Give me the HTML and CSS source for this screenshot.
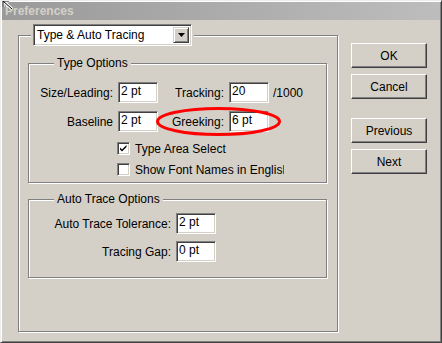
FILE: index.html
```html
<!DOCTYPE html>
<html>
<head lang="en">
    <meta charset="UTF-8">
    <title>Preferences</title>
    <link rel="stylesheet" href="styles.css">
</head>
<body>
<div class="window">
    <div class="titlebar">Preferences</div>
    <div class="client">
        <fieldset class="group outer">
            <legend class="select-legend">
                <div class="select">
                    <span class="select-text">Type &amp; Auto Tracing</span>
                    <span class="select-btn"><svg width="7" height="4" viewBox="0 0 7 4"><path d="M0 0h7L3.5 4z" fill="#000"/></svg></span>
                </div>
            </legend>

            <fieldset class="group inner type-options">
                <legend class="caption">Type Options</legend>
                <div class="form-grid type-grid">
                    <label class="lbl">Size/Leading:</label>
                    <div class="field">2 pt</div>
                    <label class="lbl">Tracking:</label>
                    <div class="field">20</div>
                    <span class="unit">/1000</span>

                    <label class="lbl">Baseline</label>
                    <div class="field">2 pt</div>
                    <label class="lbl">Greeking:</label>
                    <div class="field">6 pt</div>
                    <span></span>

                    <div class="check-row first">
                        <span class="checkbox"><svg width="9" height="9" viewBox="0 0 9 9"><path d="M1 3.5l2 2 4.5-4.5v2L3 7.5 1 5.5z" fill="#000"/></svg></span>
                        <span class="check-text">Type Area Select</span>
                    </div>
                    <div class="check-row">
                        <span class="checkbox"></span>
                        <span class="check-text clip">Show Font Names in English</span>
                    </div>
                </div>
            </fieldset>

            <fieldset class="group inner trace-options">
                <legend class="caption">Auto Trace Options</legend>
                <div class="form-grid trace-grid">
                    <label class="lbl">Auto Trace Tolerance:</label>
                    <div class="field">2 pt</div>
                    <label class="lbl">Tracing Gap:</label>
                    <div class="field">0 pt</div>
                </div>
            </fieldset>
        </fieldset>

        <div class="buttons">
            <button class="btn">OK</button>
            <button class="btn">Cancel</button>
            <button class="btn spaced">Previous</button>
            <button class="btn">Next</button>
        </div>
    </div>

    <!-- annotation drawn over the dialog -->
    <svg class="mark" width="128" height="33" viewBox="0 0 128 33">
        <ellipse cx="63.5" cy="15.5" rx="61" ry="13" fill="none" stroke="#f00" stroke-width="3"/>
    </svg>
    <svg class="cursor" width="13" height="11" viewBox="0 0 13 11">
        <path d="M2 1L11 9M2 1v6M2 1h6" stroke="#fff" stroke-width="3" fill="none"/>
        <path d="M2 1L11 9M2 1v6M2 1h6" stroke="#000" stroke-width="1" fill="none"/>
    </svg>
</div>
</body>
</html>
```

FILE: styles.css
```css
*{
    box-sizing: border-box;
}
body{
    margin: 0;
    background: #d4d0c8;
    font-family: "Liberation Sans", Arial, sans-serif;
    font-size: 12px;
    color: #000;
}
.window{
    position: relative;
    width: 442px;
    height: 343px;
    background: #d4d0c8;
    border: 1px solid;
    border-color: #ececec #404040 #404040 #ececec;
    box-shadow: inset 1px 1px 0 #fff, inset -1px -1px 0 #808080;
    padding: 1px;
    overflow: hidden;
}
.titlebar{
    height: 18px;
    line-height: 18px;
    padding-left: 3px;
    font-weight: bold;
    color: #d4d0c8;
    background: linear-gradient(to right, #9a9a9a, #bdbdbd);
}
.client{
    display: flex;
    align-items: flex-start;
    padding: 4px 0 0 16px;
}

/* group boxes */
.group{
    margin: 0;
    padding: 0;
    min-width: 0;
    border: 1px solid #808080;
    box-shadow: 1px 1px 0 #fff, inset 1px 1px 0 #fff;
}
.outer{
    width: 320px;
    height: 308px;
    padding: 0 0 0 9px;
}
.inner{
    width: 299px;
}
.select-legend{
    padding: 0 2px;
    margin-left: 3px;
    background: #d4d0c8;
}
.caption{
    margin-left: 18px;
    padding: 0 3px;
    line-height: 15px;
    background: #d4d0c8;
}
.type-options{
    margin-top: 10px;
    padding: 11px 0 6px 7px;
}
.trace-options{
    margin-top: 9px;
    padding: 6px 0 15px 7px;
}

/* dropdown */
.select{
    display: flex;
    width: 159px;
    height: 22px;
    background: #fff;
    border: 1px solid;
    border-color: #808080 #fff #fff #808080;
    box-shadow: inset 1px 1px 0 #404040, inset -1px -1px 0 #d4d0c8;
    padding: 2px;
}
.select-text{
    flex: 1;
    line-height: 16px;
    padding-left: 1px;
}
.select-btn{
    display: flex;
    align-items: center;
    justify-content: center;
    width: 16px;
    background: #d4d0c8;
    border: 1px solid;
    border-color: #d4d0c8 #404040 #404040 #d4d0c8;
    box-shadow: inset 1px 1px 0 #fff, inset -1px -1px 0 #808080;
}

/* forms */
.form-grid{
    display: grid;
    align-items: center;
}
.type-grid{
    grid-template-columns: 77px 40px 61px 40px auto;
    column-gap: 5px;
    row-gap: 8px;
}
.trace-grid{
    grid-template-columns: 135px 40px;
    column-gap: 5px;
    row-gap: 7px;
}
.lbl{
    text-align: right;
    white-space: nowrap;
}
.field{
    height: 21px;
    line-height: 17px;
    padding-left: 2px;
    background: #fff;
    border: 1px solid;
    border-color: #808080 #fff #fff #808080;
    box-shadow: inset 1px 1px 0 #404040, inset -1px -1px 0 #d4d0c8;
}
.unit{
    margin-left: -1px;
}
.check-row{
    grid-column: 2 / span 4;
    display: flex;
    align-items: center;
    gap: 5px;
    height: 13px;
    margin-left: -1px;
}
.check-row.first{
    margin-top: 2px;
}
.checkbox{
    display: flex;
    align-items: center;
    justify-content: center;
    width: 13px;
    height: 13px;
    background: #fff;
    border: 1px solid;
    border-color: #808080 #fff #fff #808080;
    box-shadow: inset 1px 1px 0 #404040, inset -1px -1px 0 #d4d0c8;
}
.check-text{
    white-space: nowrap;
}
.clip{
    width: 149px;
    overflow: hidden;
}

/* buttons */
.buttons{
    display: flex;
    flex-direction: column;
    gap: 6px;
    margin: 19px 0 0 13px;
}
.btn{
    width: 76px;
    height: 25px;
    padding: 0;
    font-family: inherit;
    font-size: 12px;
    color: #000;
    background: #d4d0c8;
    border: 1px solid;
    border-color: #fff #404040 #404040 #fff;
    box-shadow: inset -1px -1px 0 #808080;
}
.btn.spaced{
    margin-top: 13px;
}

/* overlays */
.mark{
    position: absolute;
    left: 154px;
    top: 105px;
}
.cursor{
    position: absolute;
    left: 0;
    top: -1px;
}
```
